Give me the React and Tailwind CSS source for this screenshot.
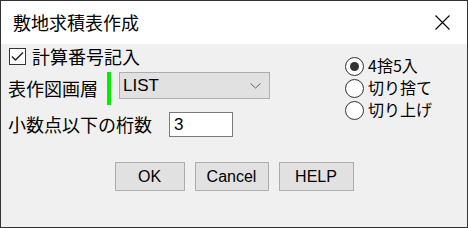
import React from "react";

const jp = { fontFamily: '"Noto Sans CJK JP", "Noto Sans", sans-serif' };
const lat = { fontFamily: '"Liberation Sans", "Noto Sans CJK JP", sans-serif' };

function Radio({ checked, label }) {
  return (
    <div className="flex items-center h-[19px]">
      <div className="w-[19px] h-[19px] rounded-full border border-[#333] bg-white flex items-center justify-center shrink-0">
        {checked && <div className="w-[9px] h-[9px] rounded-full bg-[#333]" />}
      </div>
      <span className="ml-[4px] text-[16px] leading-[19px] text-black -mt-[3px]" style={jp}>
        {label}
      </span>
    </div>
  );
}

function Btn({ w, children }) {
  return (
    <div
      className={`${w} h-[29px] border border-[#adadad] bg-[#e1e1e1] flex items-center justify-center text-[16px] text-black`}
      style={lat}
    >
      {children}
    </div>
  );
}

export default function App() {
  return (
    <div className="w-[468px] h-[228px] border border-[#333] flex flex-col bg-[#f0f0f0] overflow-hidden">
      <div className="h-[43px] bg-white flex items-center justify-between pl-[12px] pr-[17px] shrink-0">
        <span className="text-[18px] leading-none text-black -mt-[2px]" style={jp}>
          敷地求積表作成
        </span>
        <svg width="15" height="15" viewBox="0 0 15 15" className="-mt-[1px]">
          <path d="M0.5 0.5 L14.5 14.5 M14.5 0.5 L0.5 14.5" stroke="#000" strokeWidth="1.1" fill="none" />
        </svg>
      </div>
      <div className="flex-1 flex flex-col">
        <div className="flex">
          <div className="w-[344px] pl-[7px] flex flex-col">
            <div className="flex items-center h-[18px] mt-[3px]">
              <div className="ml-[1px] w-[17px] h-[17px] border border-[#333] bg-white shrink-0">
                <svg width="15" height="15" viewBox="0 0 15 15">
                  <polyline points="2,7.5 5.5,11 13,3.5" stroke="#222" strokeWidth="1.5" fill="none" />
                </svg>
              </div>
              <span className="ml-[6px] text-[18px] leading-[18px] text-black" style={jp}>
                計算番号記入
              </span>
            </div>
            <div className="flex items-start h-[33px] mt-[7px]">
              <span className="text-[18px] leading-[33px] text-black" style={jp}>
                表作図画層
              </span>
              <div className="ml-[9px] w-[4px] h-[33px] bg-[#00f000]" />
              <div className="ml-[8px] w-[151px] h-[27px] border border-[#adadad] bg-[#e1e1e1] flex items-center justify-between pl-[3px] pr-[8px]">
                <span className="text-[17px] leading-none text-black" style={lat}>
                  LIST
                </span>
                <svg width="11" height="6" viewBox="0 0 11 6">
                  <polyline points="0.5,0.5 5.5,5 10.5,0.5" stroke="#666" strokeWidth="1" fill="none" />
                </svg>
              </div>
            </div>
            <div className="flex items-center h-[25px] mt-[7px]">
              <span className="text-[18px] leading-[25px] text-black -mt-[1px]" style={jp}>
                小数点以下の桁数
              </span>
              <div className="ml-[17px] w-[64px] h-[25px] border border-[#7a7a7a] bg-white flex items-center pl-[4px]">
                <span className="text-[17px] leading-none text-black" style={lat}>
                  3
                </span>
              </div>
            </div>
          </div>
          <div className="flex flex-col gap-[3px] pt-[13px]">
            <Radio checked label="4捨5入" />
            <Radio label="切り捨て" />
            <Radio label="切り上げ" />
          </div>
        </div>
        <div className="flex justify-center gap-[10px] mt-[25px]">
          <Btn w="w-[70px]">OK</Btn>
          <Btn w="w-[74px]">Cancel</Btn>
          <Btn w="w-[75px]">HELP</Btn>
        </div>
      </div>
    </div>
  );
}
